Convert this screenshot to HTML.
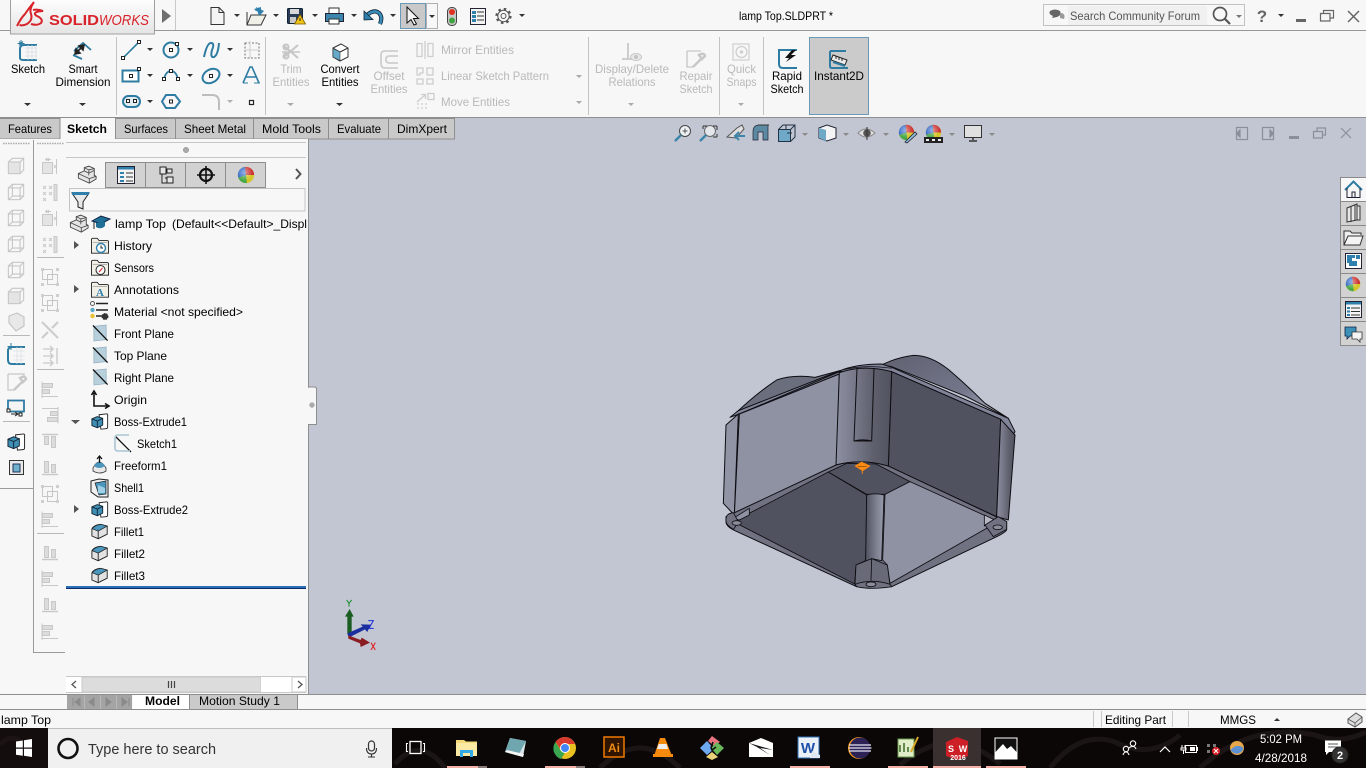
<!DOCTYPE html>
<html><head><meta charset="utf-8"><title>lamp Top.SLDPRT</title>
<style>
html,body{margin:0;padding:0;width:1366px;height:768px;overflow:hidden;background:#f7f7f7}
svg{display:block;position:absolute;left:0;top:0}
text{font-family:"Liberation Sans",sans-serif;font-size:12px;fill:#000}
.d{fill:#b9b9b9}
.m{text-anchor:middle}
</style></head><body>
<svg width="1366" height="768" viewBox="0 0 1366 768">
<defs>
<linearGradient id="col" x1="0" x2="1" y1="0" y2="0"><stop offset="0" stop-color="#8d90a2"/><stop offset=".3" stop-color="#7a7c8d"/><stop offset=".65" stop-color="#5f616e"/><stop offset="1" stop-color="#50525f"/></linearGradient>
<linearGradient id="col2" x1="0" x2="1" y1="0" y2="0"><stop offset="0" stop-color="#50525f"/><stop offset=".6" stop-color="#7f8292"/><stop offset="1" stop-color="#9a9dac"/></linearGradient>
<linearGradient id="dome" x1="0" x2="1" y1="0" y2="1"><stop offset="0" stop-color="#5f6170"/><stop offset=".6" stop-color="#73768a"/><stop offset="1" stop-color="#b2b5c2"/></linearGradient>
<linearGradient id="logo" x1="0" x2="0" y1="0" y2="1"><stop offset="0" stop-color="#fff"/><stop offset="1" stop-color="#e4e4e4"/></linearGradient>
<radialGradient id="ballg" cx=".4" cy=".35"><stop offset="0" stop-color="#fff" stop-opacity=".5"/><stop offset="1" stop-color="#fff" stop-opacity="0"/></radialGradient>
<symbol id="cube" viewBox="0 0 20 20" overflow="visible"><g fill="none" stroke="#c6c6c6" stroke-width="1.2"><rect x="1.5" y="5.5" width="13" height="13" fill="#e4e4e4"/><path d="M1.5 5.5L6 1.5H18.500V14.500L14.500 18.500M14.500 5.500L18.500 1.500"/></g></symbol>
<symbol id="cubew" viewBox="0 0 20 20" overflow="visible"><g fill="none" stroke="#c6c6c6" stroke-width="1.2"><rect x="1.5" y="5.5" width="13" height="13"/><path d="M1.5 5.5L6 1.5H18.500V14.500L14.500 18.500M14.500 5.500L18.500 1.500M6 1.500V14.500H18.500M6 14.500L1.500 18.500"/></g></symbol>
<symbol id="dis" viewBox="0 0 18 18" overflow="visible"><g fill="#dcdcdc" stroke="#c8c8c8"><rect x="1.5" y="2.5" width="10" height="4"/><rect x="1.5" y="8.5" width="7" height="4"/><path d="M1 .5V17M1 15.500H17" fill="none"/></g></symbol>
<symbol id="disv" viewBox="0 0 18 18" overflow="visible"><g fill="#dcdcdc" stroke="#c8c8c8"><rect x="3.500" y="2.500" width="4" height="11"/><rect x="10.500" y="5.500" width="4" height="8"/><path d="M1 15.500H17" fill="none" stroke-width="1.500"/></g></symbol>
<symbol id="xg" viewBox="0 0 18 18" overflow="visible"><g stroke="#c8c8c8" fill="#e4e4e4"><rect x="1.500" y="5.500" width="10" height="11"/><path d="M15.500 2V17M4 2.500H10" fill="none"/><path d="M5 1l3 3M8 1l-3 3M13 8l3 3M16 8l-3 3" fill="none"/></g></symbol>
<symbol id="xr" viewBox="0 0 18 18" overflow="visible"><g stroke="#c8c8c8" fill="none"><path d="M2 3l3 3M5 3l-3 3M8 3l3 3M11 3l-3 3M2 9l3 3M5 9l-3 3M8 9l3 3M11 9l-3 3M2 15l3 3M5 15l-3 3"/><rect x="13" y="1.500" width="3" height="16" fill="#dcdcdc"/></g></symbol>
<symbol id="sq" viewBox="0 0 18 18" overflow="visible"><g stroke="#c6c6c6" fill="none"><rect x="1.500" y="1.500" width="10" height="10"/><rect x="6.500" y="6.500" width="10" height="10"/></g><path d="M0 0h3v3H0zM15 0h3v3h-3zM0 15h3v3H0zM15 15h3v3h-3z" fill="#cfcfcf"/></symbol>
<symbol id="plane" viewBox="0 0 18 18" overflow="visible"><path d="M2 2L15 .5V16L2 17.500Z" fill="#b7d0dc" stroke="#8aa8b8" stroke-width=".7"/><path d="M1 1L16.500 17" stroke="#111" stroke-width="1.400"/></symbol>
<symbol id="ext" viewBox="0 0 20 18" overflow="visible"><path d="M9 1.500L17.500 .5Q19 1 18.500 3V15Q18.500 17 16.500 17L11 17.500Z" fill="#fff" stroke="#222"/><path d="M1 6L7 3.500 13 5.500V13L7 16 1 13.500Z" fill="#3f8fb5" stroke="#123"/><path d="M1 6L7 8.500 13 5.500M7 8.500V16" fill="none" stroke="#123"/></symbol>
<symbol id="fil" viewBox="0 0 20 18" overflow="visible"><path d="M1 6Q3 2 10 1L18 3V12L8 17 1 14Z" fill="#e2e2e2" stroke="#222"/><path d="M1.500 6L8 8.500 18 3 11 1Q4 2 1.500 6Z" fill="#4a96bd" stroke="#222" stroke-width=".8"/><path d="M8 8.500V17" stroke="#222"/></symbol>
<symbol id="folder" viewBox="0 0 20 18" overflow="visible"><path d="M.5 17V2Q.5 .5 2 .5H7L9 3H18Q19.500 3 19.500 4.500V17Z" fill="#f1efe6" stroke="#222"/><path d="M2 5H18" stroke="#aaa"/></symbol>
<symbol id="partc" viewBox="0 0 22 20" overflow="visible"><path d="M1.500 9L8 6V2.500L13 .8 19 3.500V11L21 12V15L13.500 19.500 1.500 14Z" fill="#e4e4e4" stroke="#444"/><path d="M1.500 9L13.500 14.500 21 12M13.500 14.500V19.500M8 6L13 8.500V11M13 8.500L19 5.500M8 2.500L13 5 19 3.500M13 5V8.500" fill="none" stroke="#444" stroke-width=".9"/></symbol>
<symbol id="ball" viewBox="0 0 20 20" overflow="visible"><circle cx="10" cy="10" r="9" fill="#d4c52a"/><path d="M10 10L1.500 13A9 9 0 0 1 9 1Z" fill="#2e66c7"/><path d="M10 10L9 1A9 9 0 0 1 19 10Z" fill="#cc3333"/><path d="M10 10L1.500 13A9 9 0 0 0 11 19Z" fill="#46a846"/><circle cx="10" cy="10" r="9" fill="url(#ballg)"/></symbol>
</defs>

<!-- background -->
<rect width="1366" height="768" fill="#f7f7f7"/>
<rect x="0" y="30" width="1366" height="1" fill="#989898"/>
<rect x="309" y="118" width="1057" height="576" fill="#c2c6d2"/>
<rect x="0" y="117" width="1366" height="1" fill="#8e8e8e"/>

<!-- logo -->
<rect x="10.500" y="-2" width="144" height="36" fill="url(#logo)" stroke="#a0a0a0"/>
<g fill="none" stroke="#d8232a" stroke-width="2">
<path d="M17 26Q21 18 25 14Q29 8 34 2Q29 9 31 14Q33 20 27 24Q23 26 19.500 25"/>
<path d="M33 10Q38 9 43 11L38 11.500Q33 13 36 15.500Q44 19 41 23Q37 26 31 24"/>
</g>
<text x="49" y="25" style="font-size:15px;font-weight:bold;fill:#d8232a" textLength="50" lengthAdjust="spacingAndGlyphs">SOLID</text>
<text x="99" y="25" style="font-size:15px;font-style:italic;fill:#d8232a" textLength="50" lengthAdjust="spacingAndGlyphs">WORKS</text>
<path d="M162 9L171 16 162 23Z" fill="#6e6e6e"/>
<rect x="175" y="0" width="1" height="30" fill="#c8c8c8"/>

<!-- quick toolbar -->
<path d="M211 7.500H219L224 12.500V24.500H211Z" fill="#f4f4f4" stroke="#333"/><path d="M219 7.500V12.500H224" fill="none" stroke="#333"/>
<path d="M234 14h6l-3 3z" fill="#333"/>
<path d="M247 12V25H261L266 15H251L247 25" fill="#f0efe8" stroke="#333"/><path d="M254 9L261 7V12L256 11Z M256 7L264 11 259 16Z" fill="#2f80ad"/>
<path d="M273 14h6l-3 3z" fill="#333"/>
<rect x="287.500" y="8.500" width="15" height="15" rx="1" fill="#2a3b55" stroke="#123"/><rect x="290" y="9" width="9" height="5" fill="#d8d8d8"/><rect x="290" y="17" width="6" height="6" fill="#c8c8c8"/><path d="M300 14.500L305.500 24H294.500Z" fill="#f2c417" stroke="#7a5a00" stroke-width=".8"/><path d="M300 18v3" stroke="#222"/>
<path d="M312 14h6l-3 3z" fill="#333"/>
<rect x="329" y="8" width="10" height="6" fill="#fff" stroke="#333"/><path d="M325.500 13.500H343.500V21.500H325.500Z" fill="#3c86ad" stroke="#223"/><rect x="329" y="19" width="10" height="5" fill="#fff" stroke="#333"/>
<path d="M367 15Q374 9 379 13Q383 17 380 24" fill="none" stroke="#123" stroke-width="4.200"/><path d="M367 15Q374 9 379 13Q383 17 380 24" fill="none" stroke="#3a8dba" stroke-width="2.600"/><path d="M364 11L364 20 373 19.500Z" fill="#2f80ad" stroke="#123" stroke-width=".8"/>
<path d="M351 14h6l-3 3z" fill="#333"/>
<path d="M390 14h6l-3 3z" fill="#333"/>
<rect x="400.500" y="3.500" width="25" height="25" fill="#c9c9c9" stroke="#6a9ab8"/>
<path d="M407 7V23L411 19.500 414 25 416.500 24 413.500 18.500H418.500Z" fill="#f4f4f4" stroke="#111"/>
<rect x="426.500" y="3.500" width="11" height="25" fill="#f7f7f7" stroke="#b0b0b0"/><path d="M429 15h6l-3 3z" fill="#333"/>
<rect x="447.500" y="7.500" width="9" height="18" rx="4" fill="#c8c8c8" stroke="#444"/><circle cx="452" cy="12" r="3" fill="#e03020"/><circle cx="452" cy="20.500" r="3" fill="#3fa33f"/>
<rect x="470.500" y="8.500" width="15" height="16" fill="#f4f4f4" stroke="#223"/><path d="M472 11h4v3h-4zM472 15h4v3h-4zM472 19h4v3h-4z" fill="#2f80ad"/><path d="M477 12h7M477 16h7M477 20h7" stroke="#333"/>
<circle cx="503.500" cy="16" r="7" fill="none" stroke="#555" stroke-width="2.200" stroke-dasharray="2.500 3"/><circle cx="503.500" cy="16" r="5.700" fill="#f7f7f7" stroke="#555"/><circle cx="503.500" cy="16" r="2.500" fill="none" stroke="#555"/>
<path d="M519 14h6l-3 3z" fill="#333"/>
<text x="739" y="20" textLength="94" lengthAdjust="spacingAndGlyphs">lamp Top.SLDPRT *</text>

<!-- search + window -->
<rect x="1043.500" y="4.500" width="201" height="21" fill="#f7f7f7" stroke="#c2c2c2"/>
<rect x="1068" y="6" width="139" height="19" fill="#f0f0f0"/>
<path d="M1050 11Q1055 8 1060 11Q1062 15 1057 17L1052 18 1053 16Q1048 14 1050 11Z" fill="#666"/><path d="M1060 13Q1066 13 1064 19L1060 18Z" fill="#999"/>
<text x="1070" y="20" textLength="130" lengthAdjust="spacingAndGlyphs" style="fill:#555">Search Community Forum</text>
<circle cx="1220" cy="14" r="6.500" fill="none" stroke="#555" stroke-width="1.700"/><path d="M1225 19L1230 24" stroke="#555" stroke-width="2.200"/>
<path d="M1236 15h6l-3 3z" fill="#777"/>
<text x="1262" y="22" class="m" style="font-size:17px;font-weight:bold;fill:#666">?</text>
<path d="M1278 14h6l-3 3z" fill="#333"/>
<rect x="1296" y="19" width="10" height="3" fill="#666"/>
<path d="M1323.500 13V10.500H1333.500V18H1330M1320.500 13.500H1330V21H1320.500Z" fill="none" stroke="#666" stroke-width="1.200"/>
<path d="M1348 11L1359 22M1359 11L1348 22" stroke="#666" stroke-width="1.500"/>

<!-- ribbon: separators -->
<path d="M116.500 37V115M265.500 37V115M588.500 37V115M719.500 37V115M763.500 37V115" stroke="#c4c4c4"/>

<!-- Sketch -->
<path d="M37 45H24Q20 45 20 49V58Q20 60 24 60H37" fill="none" stroke="#2f7ca3" stroke-width="2"/>
<path d="M25 48H37M25 52H37M25 56H37M28 45V60M32 45V60M36 45V60" stroke="#d7dde2" stroke-width=".8"/>
<path d="M21 40v7M17.500 43.500h7M19 41.500l4 4M23 41.500l-4 4" stroke="#2f7ca3"/>
<text x="28" y="73" class="m" textLength="34" lengthAdjust="spacingAndGlyphs">Sketch</text>
<path d="M24 103h7l-3.500 3z" fill="#333"/>
<!-- Smart dimension -->
<path d="M74 51L83 43 91 50" fill="none" stroke="#2f7ca3" stroke-width="1.800"/><path d="M73 55L82 59" stroke="#2f7ca3" stroke-width="1.800"/>
<path d="M75 54L84 45M75 54l1-5 4 4zM84 45l-1 5-4-4z" stroke="#222" stroke-width="1.600" fill="#222"/>
<text x="83" y="73" class="m" textLength="29" lengthAdjust="spacingAndGlyphs">Smart</text>
<text x="83" y="86" class="m" textLength="55" lengthAdjust="spacingAndGlyphs">Dimension</text>
<path d="M79 103h7l-3.500 3z" fill="#333"/>

<!-- sketch entity grid -->
<path d="M123 58L139 42" stroke="#2f7ca3" stroke-width="1.600"/><rect x="121.500" y="56.500" width="3" height="3" fill="#fff" stroke="#222"/><rect x="137.500" y="40.500" width="3" height="3" fill="#fff" stroke="#222"/>
<path d="M147 48h6l-3 3zM227 48h6l-3 3zM147 74h6l-3 3zM187 74h6l-3 3zM227 74h6l-3 3zM147 100h6l-3 3z" fill="#333"/>
<path d="M187 48h6l-3 3z" fill="#333"/>
<circle cx="171" cy="50" r="7.500" fill="none" stroke="#2f7ca3" stroke-width="2"/><rect x="169.500" y="48.500" width="3" height="3" fill="#fff" stroke="#222"/><rect x="175.500" y="42.500" width="3" height="3" fill="#fff" stroke="#222"/>
<path d="M204 57Q207 43 211 43Q215 43 212 50Q210 58 214 57Q218 55 219 43" fill="none" stroke="#2f7ca3" stroke-width="2"/>
<rect x="245" y="43" width="14" height="15" fill="none" stroke="#777" stroke-dasharray="2 1.500"/><path d="M250 41V58M245 50H259" stroke="#ccc"/>
<rect x="122.500" y="70.500" width="16" height="11" fill="#fff" stroke="#2f7ca3" stroke-width="2"/><rect x="129.500" y="74.500" width="3" height="3" fill="#fff" stroke="#222"/><rect x="137.500" y="67.500" width="3" height="3" fill="#fff" stroke="#222"/>
<path d="M164 79Q166 71 171 71Q176 71 178 79" fill="none" stroke="#2f7ca3" stroke-width="1.800"/><rect x="162.500" y="77.500" width="3" height="3" fill="#fff" stroke="#222"/><rect x="169.500" y="69.500" width="3" height="3" fill="#fff" stroke="#222"/><rect x="176.500" y="77.500" width="3" height="3" fill="#fff" stroke="#222"/>
<ellipse cx="211" cy="76" rx="9" ry="6.500" transform="rotate(-30 211 76)" fill="none" stroke="#2f7ca3" stroke-width="2"/><rect x="209.500" y="74.500" width="3" height="3" fill="#fff" stroke="#222"/>
<path d="M243 83L250 67 252 67 259 83M246 77H256" fill="none" stroke="#2f7ca3" stroke-width="1.600"/><path d="M248 83H243M260 83H254" stroke="#2f7ca3"/>
<rect x="123" y="96" width="17" height="11" rx="5.500" fill="#e2edf2" stroke="#2f7ca3" stroke-width="2"/><rect x="126.500" y="99.500" width="3" height="3" fill="#fff" stroke="#222"/><rect x="133.500" y="99.500" width="3" height="3" fill="#fff" stroke="#222"/>
<path d="M166 95H175L180 101.500 175 108H166L162 101.500Z" fill="none" stroke="#2f7ca3" stroke-width="2"/><rect x="169.500" y="100" width="3" height="3" fill="#fff" stroke="#222"/>
<path d="M202 95H212Q219 95 219 102V110" fill="none" stroke="#bdbdbd" stroke-width="2"/>
<path d="M227 100h6l-3 3z" fill="#b0b0b0"/>
<rect x="249.500" y="100.500" width="4" height="4" fill="#fff" stroke="#222" stroke-width="1.200"/>

<!-- Trim -->
<g fill="none" stroke="#c6c6c6" stroke-width="2"><path d="M283 45L298 58M298 45L283 58"/><circle cx="286" cy="47" r="2.500"/><circle cx="286" cy="56" r="2.500"/><path d="M282 52H300" stroke-width="1.400"/></g>
<text x="291" y="73" class="m d" textLength="21" lengthAdjust="spacingAndGlyphs">Trim</text>
<text x="291" y="86" class="m d" textLength="37" lengthAdjust="spacingAndGlyphs">Entities</text>
<path d="M287 103h7l-3.500 3z" fill="#aaa"/>
<!-- Convert -->
<path d="M333 48L341 44 348 48V57L340 61 333 57Z" fill="#fff" stroke="#333"/><path d="M333 48L340 52 348 48" fill="none" stroke="#333"/><path d="M333 48.500L340 52V60.500L333 57Z" fill="#67a9c9" stroke="#333" stroke-width=".6"/>
<text x="340" y="73" class="m" textLength="39" lengthAdjust="spacingAndGlyphs">Convert</text>
<text x="340" y="86" class="m" textLength="37" lengthAdjust="spacingAndGlyphs">Entities</text>
<path d="M336 103h7l-3.500 3z" fill="#333"/>
<!-- Offset -->
<path d="M398 51H385Q381 51 381 55V63Q381 68 385 68H398M398 56H390Q386 56 386 59V60Q386 63 390 63H398" fill="none" stroke="#cecece" stroke-width="1.800"/>
<text x="389" y="80" class="m d" textLength="31" lengthAdjust="spacingAndGlyphs">Offset</text>
<text x="389" y="93" class="m d" textLength="37" lengthAdjust="spacingAndGlyphs">Entities</text>
<!-- patterns -->
<g fill="none" stroke="#cdcdcd" stroke-width="1.300"><path d="M417 43.500H422V56.500H417ZM428 43.500H433V56.500H428ZM425 41V59"/><path d="M417 68h6v5h-3v2h-3zM427 68h6v7h-6zM417 79h6v5h-6zM427 79h6v5h-6z"/><path d="M417 102L425 95M421 94.500h4.500v4.500"/><rect x="428" y="93.500" width="6" height="6"/></g>
<path d="M417 103h2v2h-2zM421 103h2v2h-2zM425 103h2v2h-2zM417 107h2v2h-2zM421 107h2v2h-2zM425 107h2v2h-2z" fill="#dedede"/>
<text x="441" y="54" class="d" textLength="73" lengthAdjust="spacingAndGlyphs">Mirror Entities</text>
<text x="441" y="80" class="d" textLength="108" lengthAdjust="spacingAndGlyphs">Linear Sketch Pattern</text>
<text x="441" y="106" class="d" textLength="69" lengthAdjust="spacingAndGlyphs">Move Entities</text>
<path d="M576 75h6l-3 3zM576 101h6l-3 3z" fill="#aaa"/>
<!-- Display delete -->
<path d="M628 43V59M622 59H640" stroke="#c8c8c8" stroke-width="1.800" fill="none"/><ellipse cx="636" cy="57" rx="5.500" ry="3.500" fill="#e8e8e8" stroke="#c8c8c8"/><circle cx="636" cy="57" r="2" fill="#c4c4c4"/>
<text x="632" y="73" class="m d" textLength="74" lengthAdjust="spacingAndGlyphs">Display/Delete</text>
<text x="632" y="86" class="m d" textLength="47" lengthAdjust="spacingAndGlyphs">Relations</text>
<path d="M628 103h6l-3 3z" fill="#aaa"/>
<!-- Repair -->
<path d="M687 51H701M687 51V67H693" fill="none" stroke="#cfcfcf" stroke-width="1.600"/><path d="M693 67L702 58M699 55Q704 52 705 56L702 59Z" stroke="#c8c8c8" stroke-width="2.500" fill="none"/>
<text x="696" y="80" class="m d" textLength="33" lengthAdjust="spacingAndGlyphs">Repair</text>
<text x="696" y="93" class="m d" textLength="33" lengthAdjust="spacingAndGlyphs">Sketch</text>
<!-- Quick snaps -->
<rect x="733" y="44" width="16" height="16" fill="none" stroke="#cfcfcf" stroke-width="1.200"/><circle cx="741.500" cy="52" r="5.500" fill="none" stroke="#cfcfcf" stroke-width="1.300"/><circle cx="741.500" cy="52" r="1.800" fill="#cfcfcf"/>
<text x="741.500" y="73" class="m d" textLength="29" lengthAdjust="spacingAndGlyphs">Quick</text>
<text x="741.500" y="86" class="m d" textLength="30" lengthAdjust="spacingAndGlyphs">Snaps</text>
<path d="M738 103h6l-3 3z" fill="#aaa"/>
<!-- Rapid -->
<path d="M797 50H779V64Q779 68 783 68H797" fill="none" stroke="#2f7ca3" stroke-width="2"/><path d="M792 50L785 58H789L786 62 796 55H791L796 50Z" fill="#111"/>
<text x="787" y="80" class="m" textLength="30" lengthAdjust="spacingAndGlyphs">Rapid</text>
<text x="787" y="93" class="m" textLength="33" lengthAdjust="spacingAndGlyphs">Sketch</text>
<!-- Instant2D -->
<rect x="809.500" y="37.500" width="59" height="77" fill="#cbcbcb" stroke="#6a9ab8"/>
<path d="M830 51H846M830 51V66Q830 68 832 68H848" fill="none" stroke="#2f7ca3" stroke-width="2"/><path d="M833 55L847 60 845 65 831 60Z" fill="#ececec" stroke="#222"/><path d="M836 56.500V59M839 57.500V60M842 58.500V61" stroke="#222"/><path d="M833 62L845 66" stroke="#2f7ca3" stroke-width="2"/>
<text x="839" y="80" class="m" textLength="50" lengthAdjust="spacingAndGlyphs">Instant2D</text>

<!-- tabs -->
<g stroke="#8e8e8e" fill="#c9c9c9">
<rect x="-1" y="118.500" width="61" height="20.500"/>
<rect x="115.500" y="118.500" width="60" height="20.500"/>
<rect x="175.500" y="118.500" width="78" height="20.500"/>
<rect x="253.500" y="118.500" width="75" height="20.500"/>
<rect x="328.500" y="118.500" width="60" height="20.500"/>
<rect x="388.500" y="118.500" width="66" height="20.500"/>
</g>
<rect x="60" y="117" width="55" height="23" fill="#f7f7f7"/><path d="M60 139V117.500H115.500V139" fill="none" stroke="#8e8e8e"/>
<text x="8" y="133" textLength="44" lengthAdjust="spacingAndGlyphs">Features</text>
<text x="67" y="133" style="font-weight:bold" textLength="40" lengthAdjust="spacingAndGlyphs">Sketch</text>
<text x="124" y="133" textLength="44" lengthAdjust="spacingAndGlyphs">Surfaces</text>
<text x="184" y="133" textLength="62" lengthAdjust="spacingAndGlyphs">Sheet Metal</text>
<text x="262" y="133" textLength="59" lengthAdjust="spacingAndGlyphs">Mold Tools</text>
<text x="337" y="133" textLength="44" lengthAdjust="spacingAndGlyphs">Evaluate</text>
<text x="397" y="133" textLength="50" lengthAdjust="spacingAndGlyphs">DimXpert</text>

<!-- left panels -->
<rect x="0" y="139" width="309" height="555" fill="#f7f7f7"/>
<rect x="308" y="139" width="1" height="555" fill="#8e8e8e"/>
<path d="M0 488.500H33.500M33.500 140V652.500H65" fill="none" stroke="#9a9a9a"/>
<path d="M66 142.500H306M66 157.500H306" stroke="#c6c6c6"/>
<path d="M3 143.500H30M37 143.500H64" stroke="#aaa" stroke-dasharray="1.500 1" stroke-width="1.500"/>
<circle cx="186" cy="150" r="2.700" fill="#aaa" stroke="#888" stroke-width=".5"/>
<use href="#cube" x="7" y="157" width="18" height="18"/>
<use href="#cubew" x="7" y="183" width="18" height="18"/>
<use href="#cubew" x="7" y="209" width="18" height="18"/>
<use href="#cubew" x="7" y="235" width="18" height="18"/>
<use href="#cubew" x="7" y="261" width="18" height="18"/>
<use href="#cube" x="7" y="287" width="18" height="18"/>
<path d="M9 323V316L17 313 24 317V326L16 331Z" fill="#e8e8e8" stroke="#c6c6c6" stroke-width="1.200"/>
<rect x="3" y="335" width="27" height="1" fill="#b8b8b8"/>
<path d="M25 347H12Q8 347 8 351V360Q8 364 12 364H25" fill="none" stroke="#2f7ca3" stroke-width="2"/><path d="M11 343v7M7.500 346.500h7" stroke="#2f7ca3"/><path d="M13 351H25M13 356H25M13 360H25M17 347V364M21 347V364" stroke="#dde3e7" stroke-width=".8"/>
<path d="M8 374H24V378M8 374V390H14" fill="none" stroke="#cfcfcf" stroke-width="1.500"/><path d="M14 390L23 381M20 378Q25 375 26 379L23 382Z" fill="none" stroke="#c8c8c8" stroke-width="2.400"/>
<rect x="3" y="421" width="27" height="1" fill="#b8b8b8"/>
<rect x="8" y="400.500" width="16" height="11" fill="#f4f4f4" stroke="#2f7ca3" stroke-width="1.800"/><rect x="7" y="409" width="3" height="3" fill="#fff" stroke="#222"/><path d="M11 414H17M15 412L18 414 15 416" stroke="#222" fill="none"/><rect x="19" y="413" width="3" height="3" fill="#fff" stroke="#222"/>
<use href="#ext" x="7" y="433" width="19" height="18"/>
<rect x="9.500" y="460.500" width="14" height="14" fill="#e8e8e8" stroke="#333"/><rect x="13" y="464" width="7" height="8" fill="#6eb0ce" stroke="#235"/>
<g>
<use href="#xg" x="41" y="157" width="18" height="18"/><use href="#xr" x="41" y="183" width="18" height="18"/><use href="#xg" x="41" y="209" width="18" height="18"/><use href="#xr" x="41" y="235" width="18" height="18"/>
<rect x="37" y="257" width="27" height="1" fill="#b8b8b8"/>
<use href="#sq" x="41" y="268" width="18" height="18"/><use href="#sq" x="41" y="294" width="18" height="18"/>
<path d="M42 338L48 332M58 322L52 328M42 322L58 338" stroke="#cdcdcd" stroke-width="2.200"/>
<path d="M43 349H53M43 356H53M43 363H53M57 348V364M50 346l3 3-3 3M50 353l3 3-3 3M50 360l3 3-3 3" stroke="#c8c8c8" stroke-width="1.300" fill="none"/>
<rect x="37" y="369" width="27" height="1" fill="#b8b8b8"/>
<use href="#dis" x="41" y="381" width="18" height="18"/><use href="#dis" x="41" y="406" width="18" height="18" transform="rotate(180 50 415)"/><use href="#disv" x="41" y="432" width="18" height="18" transform="rotate(180 50 441)"/><use href="#disv" x="41" y="459" width="18" height="18"/><use href="#sq" x="41" y="485" width="18" height="18"/><use href="#dis" x="41" y="511" width="18" height="18"/>
<rect x="37" y="533" width="27" height="1" fill="#b8b8b8"/>
<use href="#disv" x="41" y="544" width="18" height="18"/><use href="#dis" x="41" y="570" width="18" height="18"/><use href="#disv" x="41" y="596" width="18" height="18"/><use href="#dis" x="41" y="623" width="18" height="18"/>
</g>

<!-- tree tabs -->
<g fill="#d2d2d2" stroke="#8e8e8e"><rect x="105.500" y="162.500" width="40" height="25"/><rect x="145.500" y="162.500" width="40" height="25"/><rect x="185.500" y="162.500" width="40" height="25"/><rect x="225.500" y="162.500" width="40" height="25"/></g>
<rect x="66" y="162" width="39" height="26" fill="#f7f7f7"/>
<use href="#partc" x="77" y="165" width="20" height="19"/>
<rect x="117.500" y="166.500" width="17" height="17" fill="#f4f4f4" stroke="#223"/><rect x="118" y="167" width="16" height="2.500" fill="#2f80ad"/><path d="M120 172h4v2h-4zM120 176h4v2h-4zM120 180h4v2h-4z" fill="#2f80ad"/><path d="M126 173h7M126 177h7M126 181h7" stroke="#333"/>
<path d="M160 167h6v7h-6zM162 174v9h3M165 178h6M165 183h6" fill="#e6e6e6" stroke="#222"/><rect x="167" y="169" width="5" height="4" fill="#e6e6e6" stroke="#222"/><rect x="167" y="177" width="6" height="6" fill="#e6e6e6" stroke="#222"/>
<circle cx="206" cy="175" r="6" fill="none" stroke="#111" stroke-width="2.200"/><path d="M206 166V184M197 175H215" stroke="#111" stroke-width="1.600"/>
<use href="#ball" x="237" y="166" width="18" height="18"/>
<path d="M296 169L300.500 174 296 179" fill="none" stroke="#555" stroke-width="2"/>
<rect x="69.500" y="188.500" width="235.500" height="22.500" fill="#f7f7f7" stroke="#c4c4c4"/>
<path d="M72 193H89L83 202V209L78 207V202Z" fill="#e8e8e8" stroke="#222"/><path d="M72 192H89V195H72Z" fill="#2f80ad"/>

<!-- tree -->
<use href="#partc" x="69" y="214" width="20" height="19"/>
<path d="M92 221L101 216 110 219 101 224Z" fill="#1f6f97" stroke="#124"/><path d="M96 223V227Q101 230 105 226V222" fill="#1f6f97"/><path d="M94 222V229" stroke="#222"/>
<svg x="115" y="212" width="192" height="22"><text x="0" y="16" textLength="51" lengthAdjust="spacingAndGlyphs">lamp Top</text><text x="57" y="16" textLength="135" lengthAdjust="spacingAndGlyphs">(Default&lt;&lt;Default&gt;_Displ</text></svg>
<path d="M74 241L79 245 74 249ZM74 285L79 289 74 293ZM74 505L79 509 74 513Z" fill="#555"/>
<path d="M71 420H80L75.500 424Z" fill="#555"/>
<use href="#folder" x="91" y="237" width="18" height="18"/><circle cx="101" cy="248" r="4.500" fill="#fff" stroke="#2f80ad" stroke-width="1.400"/><path d="M101 245.500V248H103" stroke="#222" fill="none"/>
<use href="#folder" x="91" y="259" width="18" height="18"/><circle cx="100.500" cy="270" r="4.500" fill="#fff" stroke="#222"/><path d="M99 272L102.500 268" stroke="#d33" stroke-width="1.200"/>
<use href="#folder" x="91" y="281" width="18" height="18"/><text x="100" y="296" class="m" style="font-family:'Liberation Serif',serif;font-size:11px;font-weight:bold;fill:#2f80ad">A</text>
<circle cx="92.500" cy="303.500" r="2" fill="#fff" stroke="#555"/><circle cx="92.500" cy="310" r="2.200" fill="#5da8cd"/><circle cx="92.500" cy="316" r="2.200" fill="#e8c030"/><path d="M96 303.500H108M96 310H108M96 316H102" stroke="#222" stroke-width="1.600"/><circle cx="105" cy="316.500" r="3" fill="#333" stroke="#333" stroke-dasharray="1.500 1"/>
<use href="#plane" x="92" y="324" width="17" height="18"/>
<use href="#plane" x="92" y="346" width="17" height="18"/>
<use href="#plane" x="92" y="368" width="17" height="18"/>
<path d="M94 393V406H108M91.500 395L94 391 96.500 395M105 403.500L109 406 105 408.500" fill="none" stroke="#111" stroke-width="1.600"/>
<use href="#ext" x="91" y="413" width="18" height="17"/>
<path d="M115 436L131 452" stroke="#111" stroke-width="1.300"/><path d="M129 435H118Q115 435 115 438V448Q115 451 118 451H130" fill="none" stroke="#a9c5d4" stroke-width="1.600"/>
<path d="M93 468Q99 456 106 468V471Q100 475 93 471Z" fill="#e8e8e8" stroke="#333" stroke-width=".8"/><path d="M94 466Q99 458 105 466Q99 470 94 466Z" fill="#4a96bd"/><path d="M99.500 463V456M97 459L99.500 456 102 459" stroke="#111" fill="none" stroke-width="1.300"/>
<path d="M91 481L99 479 108 480V497H98L91 492Z" fill="#f0f0f0" stroke="#222"/><path d="M95 483L106 481V494L99 495Z" fill="#4a96bd" stroke="#222" stroke-width=".7"/><path d="M98 485L105 488V493H98Z" fill="#9fd0e6"/>
<use href="#ext" x="91" y="501" width="18" height="17"/>
<use href="#fil" x="91" y="523" width="18" height="17"/>
<use href="#fil" x="91" y="545" width="18" height="17"/>
<use href="#fil" x="91" y="567" width="18" height="17"/>
<g>
<text x="114" y="250" textLength="38" lengthAdjust="spacingAndGlyphs">History</text>
<text x="114" y="272" textLength="40" lengthAdjust="spacingAndGlyphs">Sensors</text>
<text x="114" y="294" textLength="65" lengthAdjust="spacingAndGlyphs">Annotations</text>
<text x="114" y="316" textLength="129" lengthAdjust="spacingAndGlyphs">Material &lt;not specified&gt;</text>
<text x="114" y="338" textLength="60" lengthAdjust="spacingAndGlyphs">Front Plane</text>
<text x="114" y="360" textLength="53" lengthAdjust="spacingAndGlyphs">Top Plane</text>
<text x="114" y="382" textLength="60" lengthAdjust="spacingAndGlyphs">Right Plane</text>
<text x="114" y="404" textLength="33" lengthAdjust="spacingAndGlyphs">Origin</text>
<text x="114" y="426" textLength="73" lengthAdjust="spacingAndGlyphs">Boss-Extrude1</text>
<text x="137" y="448" textLength="40" lengthAdjust="spacingAndGlyphs">Sketch1</text>
<text x="114" y="470" textLength="53" lengthAdjust="spacingAndGlyphs">Freeform1</text>
<text x="114" y="492" textLength="30" lengthAdjust="spacingAndGlyphs">Shell1</text>
<text x="114" y="514" textLength="74" lengthAdjust="spacingAndGlyphs">Boss-Extrude2</text>
<text x="114" y="536" textLength="30" lengthAdjust="spacingAndGlyphs">Fillet1</text>
<text x="114" y="558" textLength="31" lengthAdjust="spacingAndGlyphs">Fillet2</text>
<text x="114" y="580" textLength="31" lengthAdjust="spacingAndGlyphs">Fillet3</text>
</g>
<rect x="66" y="586" width="240" height="2" fill="#2a6fb8"/><rect x="66" y="588" width="240" height="1" fill="#0a2a6a"/>
<!-- splitter -->
<path d="M308.500 387H314Q316.500 387 316.500 389V424.500H308.500" fill="#f7f7f7" stroke="#8e8e8e"/>
<rect x="306" y="388" width="3" height="36" fill="#f7f7f7"/>
<circle cx="312" cy="405" r="2.700" fill="#aaa"/>

<!-- scrollbar -->
<rect x="66" y="676" width="240" height="1" fill="#c8c8c8"/><rect x="66" y="692" width="240" height="1" fill="#c8c8c8"/>
<rect x="66" y="677" width="16" height="15" fill="#fff"/>
<rect x="82" y="677" width="179" height="15" fill="#dcdcdc" stroke="#c8c8c8"/>
<rect x="261" y="677" width="31" height="15" fill="#fff"/>
<rect x="292" y="677" width="14" height="15" fill="#fff" stroke="#c8c8c8"/>
<path d="M76 681L72 684.500 76 688M298 681L302 684.500 298 688" fill="none" stroke="#555" stroke-width="1.300"/>
<path d="M168.500 681V688M171.500 681V688M174.500 681V688" stroke="#444" stroke-width="1.200"/>

<!-- bottom line + tabs -->
<rect x="0" y="694" width="1366" height="1" fill="#8e8e8e"/>
<rect x="0" y="695" width="1366" height="14" fill="#f7f7f7"/>
<rect x="0" y="709" width="1366" height="1" fill="#8e8e8e"/>
<rect x="67" y="695" width="65" height="14" fill="#a4a4a4"/>
<path d="M84.500 695V709M100.500 695V709M116.500 695V709" stroke="#b8b8b8"/>
<path d="M73 698V706M80 698L75 702 80 706ZM94 698L89 702 94 706ZM106 698L111 702 106 706ZM122 698L127 702 122 706ZM129 698V706" fill="#8a8a8a" stroke="#8a8a8a"/>
<rect x="133" y="695" width="56" height="14" fill="#fff"/>
<text x="145" y="705" style="font-weight:bold" textLength="35" lengthAdjust="spacingAndGlyphs">Model</text>
<path d="M189.500 709V694.500H297.500V709" fill="#cacaca" stroke="#8e8e8e"/>
<text x="199" y="705" textLength="81" lengthAdjust="spacingAndGlyphs">Motion Study 1</text>

<!-- status -->
<text x="1" y="724" textLength="50" lengthAdjust="spacingAndGlyphs">lamp Top</text>
<path d="M1093.500 711V727M1101.500 711V727M1172.500 711V727M1188.500 711V727" stroke="#c8c8c8"/>
<text x="1105" y="724" textLength="61" lengthAdjust="spacingAndGlyphs">Editing Part</text>
<text x="1220" y="724" textLength="36" lengthAdjust="spacingAndGlyphs">MMGS</text>
<path d="M1274 721h6l-3-3z" fill="#333"/>
<path d="M1348 719L1356 713 1362 717V722L1355 727 1348 723Z" fill="#ddd" stroke="#555"/><path d="M1348 719L1355 723 1362 717M1355 723V727" fill="none" stroke="#555" stroke-width=".8"/>

<!-- view toolbar -->
<circle cx="685" cy="131" r="5.500" fill="#eef2f5" stroke="#444"/><path d="M681 135L675 141" stroke="#3d84aa" stroke-width="2.400"/><path d="M685 128.500v5M682.500 131h5" stroke="#555"/>
<circle cx="710" cy="131" r="5.500" fill="#e4e8ec" stroke="#666"/><path d="M706 135L700 141" stroke="#3d84aa" stroke-width="2.400"/><path d="M703 126h4M713 126h4M717 126v4M717 134v3M713 137h4M703 126v3" stroke="#333" fill="none"/>
<path d="M727 137L737 128 742 125 744 129 736 138Z" fill="#dfdfdf" stroke="#555"/><path d="M745 136H735M739 132L735 136 739 140" stroke="#3d84aa" stroke-width="2" fill="none"/>
<path d="M753 132Q753 125 759 125H768V140H763V132H758V140H753Z" fill="#5c8aa3" stroke="#223" stroke-width=".7"/><path d="M758 125L769 125" stroke="#333"/>
<rect x="778.500" y="129.500" width="12" height="12" fill="#6fa9c7" stroke="#234"/><path d="M778.500 129.500L783 125H795V137L790.500 141.500M790.500 129.500L795 125" fill="none" stroke="#234"/><path d="M786 125v4M792 133h-5" stroke="#234"/>
<path d="M802 133h6l-3 3z" fill="#8a8a8a"/>
<path d="M819 128L827 125 836 128V138L827 141 819 138Z" fill="#f4f4f4" stroke="#223"/><path d="M819 128L826 130V141L819 138Z" fill="#6fa9c7"/>
<path d="M843 133h6l-3 3z" fill="#8a8a8a"/>
<path d="M858 133Q866 125 875 133Q866 141 858 133Z" fill="#e0e0e0" stroke="#888"/><circle cx="867" cy="133" r="3.800" fill="#555"/><path d="M867 127V140" stroke="#333"/>
<path d="M883 133h6l-3 3z" fill="#8a8a8a"/>
<use href="#ball" x="898" y="124" width="17" height="17"/><path d="M905 142L915 132 917 134 907 143Z" fill="#8fc0dc" stroke="#223" stroke-width=".8"/>
<use href="#ball" x="925" y="124" width="17" height="17"/><path d="M924 137H943V143H924Z" fill="#222"/><path d="M926 139h3v2h-3zM932 139h3v2h-3zM938 139h3v2h-3z" fill="#eee"/>
<path d="M949 133h6l-3 3z" fill="#8a8a8a"/>
<rect x="964.500" y="125.500" width="17" height="12" fill="#e0e0e0" stroke="#333"/><path d="M973 138V140M969 141H977" stroke="#333" stroke-width="1.500"/>
<path d="M989 133h6l-3 3z" fill="#8a8a8a"/>
<!-- viewport window buttons -->
<g fill="none" stroke="#8b8f9b" stroke-width="1.200"><rect x="1236.500" y="127.500" width="11" height="12"/><rect x="1262.500" y="127.500" width="11" height="12"/><path d="M1240 130V137L1236.500 133.500Z M1270 130V137L1273.500 133.500Z" fill="#8b8f9b"/><path d="M1317 131V128H1325.500V135H1323M1313.500 131.500H1322.500V138H1313.500Z"/><path d="M1341 128L1351 138M1351 128L1341 138"/></g>
<rect x="1289" y="136" width="10" height="3" fill="#8b8f9b"/>

<!-- right task pane -->
<rect x="1340.500" y="177.500" width="26" height="168" fill="#d2d2d2" stroke="#8a8a8a"/>
<rect x="1341" y="178" width="25" height="23" fill="#f7f7f7"/>
<path d="M1341 201.500H1366M1341 225.500H1366M1341 249.500H1366M1341 273.500H1366M1341 297.500H1366M1341 321.500H1366" stroke="#8a8a8a"/>
<path d="M1345 190L1353.500 181.500 1362 190" fill="none" stroke="#2f7ca3" stroke-width="2"/><path d="M1347 188V197.500H1360V188M1352 197V192H1355V197" fill="none" stroke="#223"/>
<path d="M1347 208L1357 204V220L1347 222Z M1351 206V222M1355 205V221" fill="#e6e6e6" stroke="#333"/><path d="M1357 206H1360V220H1357Z" fill="#e6e6e6" stroke="#333"/>
<path d="M1344 245V231H1350L1352 233H1361V235" fill="#eee" stroke="#333"/><path d="M1344 245L1348 236H1363L1360 245Z" fill="#f4f4f4" stroke="#333"/>
<rect x="1345.500" y="253.500" width="16" height="15" fill="#fff" stroke="#223"/><path d="M1347 255h8v3h-3v3h5v5h-8v-3h-2z" fill="#2f80ad"/><rect x="1356" y="255" width="4" height="4" fill="#2f80ad"/>
<use href="#ball" x="1345" y="276" width="16" height="16"/>
<rect x="1345.500" y="301.500" width="16" height="16" fill="#f4f4f4" stroke="#223"/><rect x="1346" y="302" width="15" height="2.500" fill="#2f80ad"/><path d="M1347 307h3v2h-3zM1347 310.500h3v2h-3zM1347 314h3v2h-3z" fill="#2f80ad"/><path d="M1351 308h9M1351 311.500h9M1351 315h9" stroke="#333"/>
<path d="M1345 327H1356V336H1350L1347 339V336H1345Z" fill="#3d90b8" stroke="#124" stroke-width=".8"/><path d="M1352 332H1362V339H1360V342L1357 339H1352Z" fill="#f4f4f4" stroke="#333" stroke-width=".8"/>

<!-- triad -->
<g transform="translate(330 590) scale(.3333)">
<path d="M52 132V80H45L59 57 71 80H65V132Z" fill="#1a5c22"/>
<path d="M52 130L98 110 92 103 122 104 112 126 105 118 56 143Z" fill="#1c2f9f"/>
<path d="M55 136L92 150 95 143 120 158 92 171 90 160 55 146Z" fill="#8a1d22"/>
<path d="M50 30L57 40 65 30M57 40V50" fill="none" stroke="#148a2a" stroke-width="3"/>
<path d="M115 92H130L117 115H131" fill="none" stroke="#1a2ed8" stroke-width="3"/>
<path d="M123 158L136 180M136 158L123 180" stroke="#e01818" stroke-width="3"/>
</g>

<!-- model -->
<g transform="translate(700 340) scale(.33333)" stroke="#0d0d12" stroke-width="3" stroke-linejoin="round">
<path d="M545 75Q590 52 640 46Q690 45 745 88Q800 135 855 190L925 235 800 170 575 80Z" fill="url(#dome)"/>
<path d="M112 215Q170 160 230 120Q280 103 345 112L420 92 418 110 120 225Z" fill="#6b6e7c"/>
<path d="M90 232L115 212 420 92Q470 72 545 72L575 82 925 235 945 275 935 290 902 238 575 95H418L118 222Z" fill="#82859a"/>
<path d="M78 255L115 222 103 525 70 490Z" fill="#9194a4"/>
<path d="M118 222L418 102 410 375 103 525Z" fill="#8f92a3"/>
<path d="M575 95L902 238 890 530 565 380Z" fill="#50525f"/>
<path d="M902 238L945 285 925 540 890 530Z" fill="url(#col)"/>
<path d="M418 98Q490 72 575 95L565 380Q490 355 408 375Z" fill="url(#col)"/>
<path d="M471 85L462 303H515L522 85" fill="none"/>
<path d="M462 303Q488 296 515 303" fill="none"/>
<path d="M420 92Q490 72 575 85" fill="none" stroke-width="2"/>
<path d="M78 530L408 375Q485 355 565 378L920 545V568Q920 575 890 590L575 740H470L105 572Q78 560 78 545Z" fill="#707281"/>
<path d="M100 545L385 396 500 465 497 662 468 675 464 732Z" fill="#50525f" stroke-width="2.500"/>
<path d="M385 396L440 370 528 372 630 425 555 463H500Z" fill="#50525f" stroke-width="2.500"/>
<path d="M555 463L630 425 895 545 570 730 562 675 548 660Z" fill="#8f92a3" stroke-width="2.500"/>
<path d="M500 465Q525 458 552 465L545 662 515 656 497 664Z" fill="url(#col2)" stroke-width="2.500"/>
<path d="M468 675L515 656 562 675 570 735Q515 745 465 733Z" fill="#686a78" stroke-width="2.500"/>
<path d="M515 656L513 722" fill="none" stroke-width="2.500"/>
<path d="M148 505V525L118 540 100 535Z" fill="#8f92a3" stroke-width="2.500"/>
<path d="M853 525V558L880 548 895 545Z" fill="#b5b8c4" stroke-width="2.500"/>
<path d="M78 535Q80 520 100 518L115 545Q100 570 100 568Q80 555 78 545Z" fill="#707281" stroke-width="2.500"/>
<path d="M920 545V568L880 590 855 555 895 530Z" fill="#707281" stroke-width="2.500"/>
<path d="M465 733Q515 715 570 733L575 740Q515 750 470 740Z" fill="#707281" stroke-width="2.500"/>
<ellipse cx="110" cy="549" rx="14" ry="7" fill="#8a8c9a" stroke-width="2.500"/>
<ellipse cx="893" cy="562" rx="14" ry="7" fill="#8a8c9a" stroke-width="2.500"/>
<ellipse cx="513" cy="733" rx="15" ry="7" fill="#8a8c9a" stroke-width="2.500"/>
<path d="M465 378L485 366 510 378 488 392Z" fill="#ff8a14" stroke="#ff8a14" stroke-width="2"/>
<path d="M487 392V401" stroke="#ff8a14" stroke-width="3"/><path d="M473 379H500" stroke="#7a4a10" stroke-width="2"/>
</g>

<!-- taskbar -->
<rect x="0" y="728" width="1366" height="40" fill="#0c0707"/>
<g fill="none" stroke="#2a2020" stroke-width="5" opacity=".55">
<path d="M0 745Q12 730 28 748M395 764Q420 735 445 768M600 768Q640 728 680 768M900 765Q950 722 1000 764M1050 768Q1080 730 1115 742Q1150 760 1180 735M1200 768Q1250 722 1315 735 1340 745 1366 732"/>
</g>
<rect x="0" y="728" width="48" height="40" fill="#1c1313" opacity=".5"/>
<path d="M16 741.500L22.800 740.500V747.500H16ZM24 740.300L32 739V747.500H24ZM16 748.700H22.800V755.700L16 754.700ZM24 748.700H32V757L24 755.800Z" fill="#fff"/>
<rect x="48" y="729" width="344" height="39" fill="#f0f0f0"/><rect x="48" y="728" width="344" height="1" fill="#bdbdbd"/>
<circle cx="68" cy="748.500" r="9.500" fill="none" stroke="#111" stroke-width="2.600"/>
<text x="88" y="754" style="font-size:15px;fill:#333" textLength="128" lengthAdjust="spacingAndGlyphs">Type here to search</text>
<rect x="368.500" y="741" width="6" height="10" rx="3" fill="none" stroke="#333" stroke-width="1.200"/><path d="M366.500 748Q366.500 754 371.500 754Q376.500 754 376.500 748M371.500 754V757M368 757H375" fill="none" stroke="#333" stroke-width="1.100"/>
<rect x="410" y="741.500" width="11" height="12" fill="none" stroke="#fff" stroke-width="1.300"/><path d="M408 743.500H406.500V751.500H408M423 743.500H424.500V751.500H423" fill="none" stroke="#fff" stroke-width="1.100"/>
<!-- running indicators -->
<g fill="#f2b0a6"><rect x="447" y="766" width="31" height="2"/><rect x="545" y="766" width="31" height="2"/><rect x="790" y="766" width="40" height="2"/><rect x="888" y="766" width="40" height="2"/><rect x="933" y="766" width="48" height="2"/><rect x="986" y="766" width="40" height="2"/></g>
<g fill="#8a7a78"><rect x="478" y="766" width="9" height="2"/><rect x="576" y="766" width="9" height="2"/></g>
<!-- explorer -->
<path d="M456 740H464L466 741.500H477V756H456Z" fill="#f3d97a"/><path d="M456 743H477V756H456Z" fill="#fbe9a4"/><path d="M460 750H473V757H470V753H463V757H460Z" fill="#35a9e8"/>
<!-- notepad -->
<path d="M510 738L526 741 523 757 505 752Z" fill="#d7e5e6"/><path d="M510 738L526 741 519 754 505 752Z" fill="#6fa6b0"/><path d="M505 752L523 757 524 754 507 750Z" fill="#f4f4f4"/>
<!-- chrome -->
<circle cx="565" cy="748" r="11" fill="#e8c020"/><path d="M565 737A11 11 0 0 1 575 744H565A4.500 4.500 0 0 0 561 750L555.500 742Q559 737 565 737Z" fill="#d93a2f"/><path d="M555.500 742L561 751 565 752.500 561 759A11 11 0 0 1 555.500 742Z" fill="#3aa64f"/><circle cx="565" cy="748" r="5" fill="#fff"/><circle cx="565" cy="748" r="4" fill="#4285f4"/>
<!-- Ai -->
<rect x="604" y="737" width="20" height="20" fill="#2f1500" stroke="#ee7a00" stroke-width="1.500"/>
<text x="614" y="752" class="m" style="font-size:12px;font-weight:bold;fill:#ee8a12">Ai</text>
<!-- vlc -->
<path d="M660 738H665L672 756H654Z" fill="#f58a0c"/><path d="M658.700 744H666.500L668 749H657Z" fill="#eee"/><rect x="653" y="754" width="20" height="3" fill="#f58a0c"/>
<!-- gitkraken style -->
<path d="M712 736L720 742 714 746 708 741Z" fill="#e87480"/><path d="M707 741L714 749 707 755 700 748Z" fill="#6ea8f0"/><path d="M717 742L724 748 717 755 711 748Z" fill="#68b85a"/><path d="M712 752L718 757 712 760 706 757Z" fill="#ead27a"/><path d="M713 742L711 748 713 752M716 747L712 750" stroke="#111" stroke-width="1.600" fill="none"/>
<!-- mail -->
<path d="M749 743L761 738 773 743V757H749Z" fill="#fff"/><path d="M749 743L773 750 760 748 770 755 757 747Z" fill="#111"/>
<!-- word -->
<rect x="798" y="737" width="21" height="21" fill="#eaf1f8" stroke="#2b6fb5"/><text x="808" y="753" class="m" style="font-size:15px;font-weight:bold;fill:#1b4fa8">W</text><path d="M812 751L820 755V758H810Z" fill="#dfe8f0"/>
<!-- eclipse -->
<circle cx="859" cy="748" r="11" fill="#f39a1e"/><circle cx="860" cy="748" r="10.500" fill="#2c2255"/><path d="M849 745H871M848.500 748H871.500M849 751H871" stroke="#e6e6f4" stroke-width="1.200"/>
<!-- green doc -->
<rect x="898" y="739" width="16" height="18" fill="#e0edc8" stroke="#6a9a4a"/><path d="M900 745V752M904 743V752M908 747V752" stroke="#3a6a2a" stroke-width="1.500"/><path d="M911 752L918 737" stroke="#d8a928" stroke-width="2"/>
<!-- SW -->
<rect x="933" y="728" width="48" height="38" fill="#3a3030"/>
<path d="M946 742L957 737 968 741V756L957 760 946 756Z" fill="#cc1f26"/><text x="951" y="752" class="m" style="font-size:9px;font-weight:bold;fill:#fff">S</text><text x="963" y="752" class="m" style="font-size:9px;font-weight:bold;fill:#fff">W</text><text x="958" y="760" class="m" style="font-size:7px;font-weight:bold;fill:#fff">2016</text>
<!-- photos -->
<rect x="995" y="738" width="22" height="21" fill="#111" stroke="#fff"/><path d="M995.500 758V752L1003 744 1007 749 1011 746 1016.500 752V758.500H995.500Z" fill="#fff"/>
<!-- tray -->
<g fill="none" stroke="#fff" stroke-width="1.100"><circle cx="1133" cy="743.500" r="2.700"/><circle cx="1126" cy="749" r="2.700"/><path d="M1123 755Q1124 752 1126 752Q1128 752 1129 755M1129 748Q1131 746 1133 746.500Q1135 746.500 1136 749"/></g>
<path d="M1160 752L1165 747 1170 752" fill="none" stroke="#fff" stroke-width="1.200"/>
<rect x="1185.500" y="745.500" width="11" height="7" fill="none" stroke="#fff"/><rect x="1190" y="747" width="5" height="4" fill="#fff"/><rect x="1197" y="747" width="1" height="4" fill="#fff"/><path d="M1182 745v3M1185 745v3M1181 748h5v2h-5zM1183.500 750v4" stroke="#fff" fill="none"/>
<path d="M1207 744h3v3h-3zM1213 744h3v3h-3zM1207 750h3v3h-3z" fill="#777"/><circle cx="1216" cy="751" r="4" fill="#d9252a"/><path d="M1214 749L1218 753M1218 749L1214 753" stroke="#fff"/>
<circle cx="1237" cy="748" r="7" fill="#e8a84a"/><path d="M1230.500 750Q1237 743 1243.500 748A7 7 0 0 1 1230.500 750Z" fill="#5d90d0"/>
<text x="1281" y="743" class="m" style="fill:#fff" textLength="42" lengthAdjust="spacingAndGlyphs">5:02 PM</text>
<text x="1281" y="762" class="m" style="fill:#fff" textLength="52" lengthAdjust="spacingAndGlyphs">4/28/2018</text>
<path d="M1325 740.500H1341V752H1329L1326 755V752H1325Z" fill="#fff"/><path d="M1328 744H1338M1328 747H1338" stroke="#222" stroke-width=".8"/>
<circle cx="1340" cy="755" r="8" fill="#333" stroke="#222"/><text x="1340" y="759" class="m" style="fill:#fff;font-size:11px;font-weight:bold">2</text>
</svg>
</body></html>
